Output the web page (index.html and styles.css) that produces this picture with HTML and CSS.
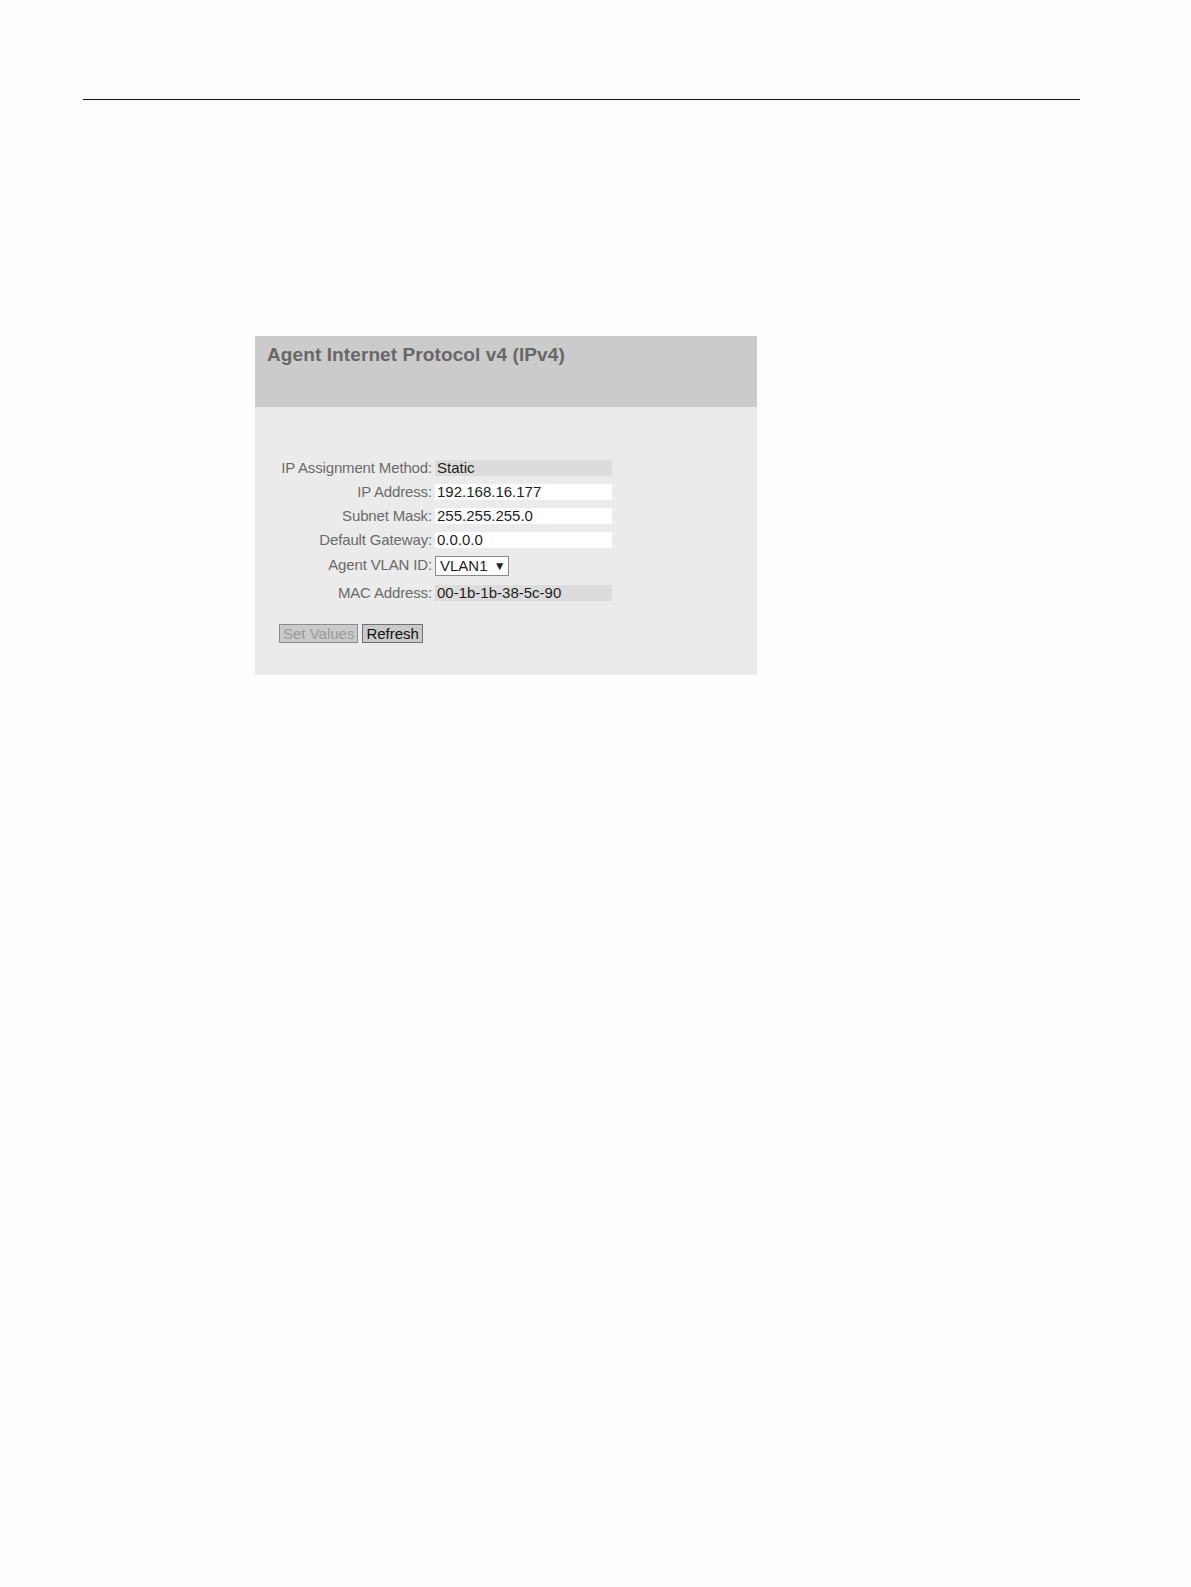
FILE: index.html
```html
<!DOCTYPE html>
<html>
<head>
<meta charset="utf-8">
<link rel="stylesheet" href="styles.css">
</head>
<body>
<div class="page">
  <hr class="rule">
  <div class="panel">
    <div class="panel-head">
      <h1 class="title">Agent Internet Protocol v4 (IPv4)</h1>
    </div>
    <div class="panel-body">
      <div class="form">
        <div class="label">IP Assignment Method:</div>
        <div class="field ro">Static</div>
        <div class="label">IP Address:</div>
        <div class="field">192.168.16.177</div>
        <div class="label">Subnet Mask:</div>
        <div class="field">255.255.255.0</div>
        <div class="label">Default Gateway:</div>
        <div class="field">0.0.0.0</div>
        <div class="label label-top">Agent VLAN ID:</div>
        <div class="select-cell"><div class="select">VLAN1 <span class="arrow">&#9660;</span></div></div>
        <div class="label">MAC Address:</div>
        <div class="field ro">00-1b-1b-38-5c-90</div>
      </div>
      <div class="buttons">
        <button class="btn disabled">Set Values</button>
        <button class="btn">Refresh</button>
      </div>
    </div>
  </div>
</div>
</body>
</html>
```

FILE: styles.css
```css
html, body {
  margin: 0;
  padding: 0;
  background: #fefefe;
}
body {
  font-family: "Liberation Sans", Arial, sans-serif;
}
.page {
  width: 1191px;
  height: 1587px;
  padding-top: 99px;
  box-sizing: border-box;
}
.rule {
  margin: 0 0 0 83px;
  width: 997px;
  border: 0;
  border-top: 1px solid #111;
  height: 0;
}
.panel {
  margin: 236px 0 0 255px;
  width: 502px;
}
.panel-head {
  background: #cbcbcb;
  height: 71px;
  box-sizing: border-box;
  padding: 8px 12px 0;
}
.title {
  margin: 0;
  font-size: 19px;
  font-weight: bold;
  color: #676767;
  line-height: 22px;
  letter-spacing: 0.1px;
}
.panel-body {
  background: #ebebeb;
  height: 268px;
  box-sizing: border-box;
  padding: 53px 0 0 0;
}
.form {
  display: grid;
  grid-template-columns: 177px 177px;
  column-gap: 3px;
  row-gap: 8px;
  font-size: 15px;
  align-items: center;
}
.label {
  text-align: right;
  color: #6a6a6a;
  line-height: 16px;
  letter-spacing: -0.15px;
}
.label-top {
  align-self: start;
  padding-top: 1px;
}
.field {
  background: #ffffff;
  height: 16px;
  line-height: 16px;
  padding-left: 2px;
  color: #1e1e1e;
}
.field.ro {
  background: #dcdcdc;
}
.select-cell {
  display: flex;
  padding: 0 0 1px;
}
.select {
  width: 74px;
  height: 20px;
  box-sizing: border-box;
  border: 1px solid #8a8a8a;
  background: #fff;
  color: #1e1e1e;
  line-height: 18px;
  padding-left: 4px;
  font-size: 15px;
  white-space: nowrap;
}
.arrow {
  font-size: 12px;
  margin-left: 2px;
  position: relative;
  top: -1px;
}
.buttons {
  display: flex;
  gap: 4px;
  margin: 23px 0 0 24px;
}
.btn {
  font-family: "Liberation Sans", Arial, sans-serif;
  font-size: 15px;
  height: 19px;
  padding: 0 3px;
  margin: 0;
  border: 1px solid #707070;
  background: #cacaca;
  color: #111;
  line-height: 17px;
  border-radius: 0;
}
.btn.disabled {
  color: #9a9a9a;
  border-color: #8c8c8c;
}
```
